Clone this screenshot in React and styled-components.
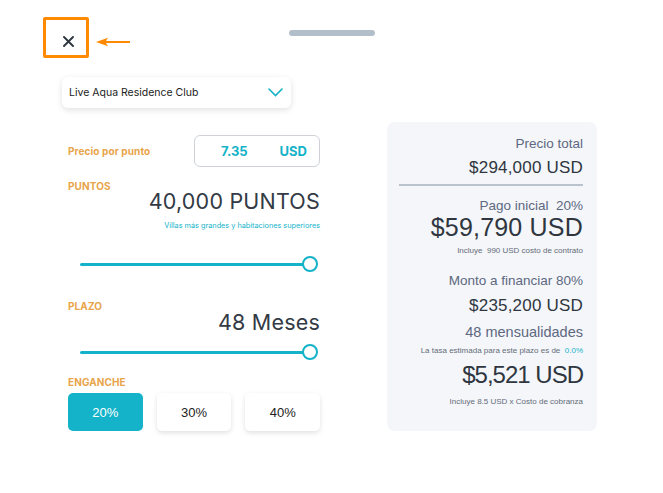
import React, { useState } from 'react';
import styled, { createGlobalStyle } from 'styled-components';

const GlobalStyle = createGlobalStyle`
  body {
    margin: 0;
    background: #ffffff;
    font-family: 'Inter', 'Noto Sans', sans-serif;
    color: #2f3640;
  }
`;

const teal = '#14b3c9';
const orange = '#e8a44a';

const Page = styled.div`
  width: 663px;
  height: 493px;
  overflow: hidden;
  position: relative;
`;

const StatusBar = styled.div`
  height: 4px;
  display: flex;
  justify-content: space-between;
  align-items: flex-end;
  padding: 0 8px;
  margin-top: -6px;
  margin-bottom: 2px;
  font-size: 9px;
  color: #b8b8b8;
  .pill {
    width: 27px;
    height: 9px;
    border-radius: 5px;
    background: #f26b4f;
    margin-right: 60px;
  }
`;

const Header = styled.div`
  display: grid;
  grid-template-columns: 1fr auto 1fr;
  align-items: start;
  height: 77px;
  box-sizing: border-box;
  padding-top: 17px;
`;

const CloseArea = styled.div`
  display: flex;
  align-items: center;
  gap: 7px;
  padding-left: 43px;
  svg.arrow {
    margin-top: 9px;
  }
`;

const CloseButton = styled.button`
  width: 46px;
  height: 41px;
  box-sizing: border-box;
  border: 3px solid #ff8a00;
  border-radius: 2px;
  background: #fff;
  display: flex;
  align-items: flex-end;
  justify-content: center;
  padding: 0 0 8px 4px;
  cursor: pointer;
`;

const Handle = styled.div`
  width: 86px;
  height: 6px;
  border-radius: 3px;
  background: #b2bfcb;
  margin-top: 13px;
`;

const Main = styled.div`
  display: flex;
  padding-left: 62px;
  gap: 67px;
`;

const LeftColumn = styled.div`
  width: 258px;
  display: flex;
  flex-direction: column;
`;

const Select = styled.div`
  width: 229px;
  height: 31px;
  box-sizing: border-box;
  border-radius: 6px;
  background: #fff;
  box-shadow: 0 2px 6px rgba(0, 0, 0, 0.12);
  display: flex;
  align-items: center;
  justify-content: space-between;
  padding: 0 8px 0 7px;
  font-size: 10.5px;
  color: #222;
`;

const PriceRow = styled.div`
  display: flex;
  align-items: center;
  justify-content: space-between;
  margin-top: 27px;
  padding-left: 6px;
`;

const Label = styled.div`
  font-size: 10px;
  font-weight: 700;
  color: ${orange};
  line-height: 12px;
  letter-spacing: 0.1px;
`;

const PriceBox = styled.div`
  width: 126px;
  height: 32px;
  box-sizing: border-box;
  border: 1px solid #cfd3d8;
  border-radius: 6px;
  display: flex;
  align-items: center;
  justify-content: space-between;
  padding: 0 12px 0 26px;
  font-size: 13px;
  font-weight: 700;
  color: ${teal};
`;

const Section = styled.div`
  margin-top: ${(p) => p.$top}px;
  padding-left: 6px;
`;

const SectionHead = styled.div`
  display: flex;
  justify-content: space-between;
  align-items: flex-start;
`;

const BigValue = styled.div`
  font-size: 21.5px;
  line-height: 26px;
  margin-top: ${(p) => p.$top || 7}px;
  color: #333a45;
  letter-spacing: 0.2px;
`;

const Hint = styled.div`
  text-align: right;
  font-size: 7.3px;
  line-height: 10px;
  color: ${teal};
  margin-top: 7px;
`;

const SliderWrap = styled.div`
  position: relative;
  margin: ${(p) => p.$top}px 0 0 18px;
  width: 232px;
  height: 16px;
  display: flex;
  align-items: center;
`;

const Track = styled.div`
  width: 100%;
  height: 3px;
  border-radius: 2px;
  background: ${teal};
`;

const Thumb = styled.div`
  position: absolute;
  top: 0;
  width: 16px;
  height: 16px;
  box-sizing: border-box;
  border-radius: 50%;
  border: 2px solid ${teal};
  background: #fff;
  transform: translateX(-50%);
`;

const Options = styled.div`
  display: flex;
  gap: 14px;
  margin-top: 5px;
  padding-left: 6px;
`;

const Option = styled.button`
  width: 75px;
  height: 38px;
  border: none;
  border-radius: 5px;
  font-family: 'Liberation Sans', Arial, sans-serif;
  font-size: 13px;
  cursor: pointer;
  background: ${(p) => (p.$active ? teal : '#fff')};
  color: ${(p) => (p.$active ? '#fff' : '#222')};
  box-shadow: ${(p) => (p.$active ? 'none' : '0 2px 5px rgba(0,0,0,0.12)')};
`;

const Card = styled.div`
  margin-top: 45px;
  width: 210px;
  height: 309px;
  box-sizing: border-box;
  border-radius: 8px;
  background: #f4f6fa;
  padding: 13px 14px 0 12px;
  text-align: right;
  font-family: 'Liberation Sans', Arial, sans-serif;
`;

const CardLabel = styled.div`
  font-size: ${(p) => p.$size || 13.5}px;
  line-height: 17px;
  color: #5d6880;
  margin-top: ${(p) => p.$top || 0}px;
  white-space: pre;
`;

const CardValue = styled.div`
  font-size: ${(p) => p.$size}px;
  line-height: ${(p) => p.$size + 4}px;
  color: #2f3640;
  margin-top: ${(p) => p.$top || 0}px;
  letter-spacing: ${(p) => p.$spacing || 0}px;
`;

const Note = styled.div`
  font-size: 8px;
  line-height: 10px;
  color: #646c78;
  margin-top: ${(p) => p.$top || 0}px;
  white-space: pre;
  span {
    color: ${teal};
  }
`;

const Divider = styled.div`
  height: 2px;
  background: #b9c3cd;
  margin: 6px 0 0 0;
`;

const Slider = ({ top, value }) => (
  <SliderWrap $top={top}>
    <Track />
    <Thumb style={{ left: `${value}%` }} />
  </SliderWrap>
);

export default function App() {
  const [down, setDown] = useState(20);
  return (
    <Page>
      <GlobalStyle />
      <StatusBar>
        <span>9:41 · Tue Dec 8 · Wi-Fi</span>
        <div className="pill" />
      </StatusBar>
      <Header>
        <CloseArea>
          <CloseButton aria-label="Cerrar">
            <svg width="11" height="11" viewBox="0 0 11 11">
              <path d="M1 1L10 10M10 1L1 10" stroke="#2f3640" strokeWidth="1.9" strokeLinecap="round" />
            </svg>
          </CloseButton>
          <svg className="arrow" width="34" height="10" viewBox="0 0 34 10">
            <path d="M0 5L12 0.8L10 4L34 4L34 6L10 6L12 9.2Z" fill="#ff8a00" />
          </svg>
        </CloseArea>
        <Handle />
        <div />
      </Header>
      <Main>
        <LeftColumn>
          <Select>
            <span>Live Aqua Residence Club</span>
            <svg width="15" height="9" viewBox="0 0 15 9">
              <path d="M1 1L7.5 7.5L14 1" fill="none" stroke={teal} strokeWidth="1.6" strokeLinecap="round" />
            </svg>
          </Select>
          <PriceRow>
            <Label>Precio por punto</Label>
            <PriceBox>
              <span>7.35</span>
              <span>USD</span>
            </PriceBox>
          </PriceRow>
          <Section $top={13}>
            <SectionHead>
              <Label>PUNTOS</Label>
              <BigValue $top={8}>40,000 PUNTOS</BigValue>
            </SectionHead>
            <Hint>Villas más grandes y habitaciones superiores</Hint>
          </Section>
          <Slider top={25} value={99} />
          <Section $top={28}>
            <SectionHead>
              <Label>PLAZO</Label>
              <BigValue $top={9}>48 Meses</BigValue>
            </SectionHead>
          </Section>
          <Slider top={9} value={99} />
          <Section $top={16}>
            <Label>ENGANCHE</Label>
          </Section>
          <Options>
            {[20, 30, 40].map((v) => (
              <Option key={v} $active={down === v} onClick={() => setDown(v)}>
                {v}%
              </Option>
            ))}
          </Options>
        </LeftColumn>
        <Card>
          <CardLabel>Precio total</CardLabel>
          <CardValue $size={17} $top={5} $spacing={0.2}>$294,000 USD</CardValue>
          <Divider />
          <CardLabel $top={11}>{'Pago inicial  20%'}</CardLabel>
          <CardValue $size={25} $top={-1} $spacing={0.2}>$59,790 USD</CardValue>
          <Note $top={4}>{'Incluye  990 USD costo de contrato'}</Note>
          <CardLabel $top={16}>Monto a financiar 80%</CardLabel>
          <CardValue $size={17} $top={6} $spacing={0.2}>$235,200 USD</CardValue>
          <CardLabel $size={14.5} $top={8}>48 mensualidades</CardLabel>
          <Note $top={5}>
            {'La tasa estimada para este plazo es de  '}
            <span>0.0%</span>
          </Note>
          <CardValue $size={24} $top={5} $spacing={-1}>$5,521 USD</CardValue>
          <Note $top={8}>Incluye 8.5 USD x Costo de cobranza</Note>
        </Card>
      </Main>
    </Page>
  );
}
